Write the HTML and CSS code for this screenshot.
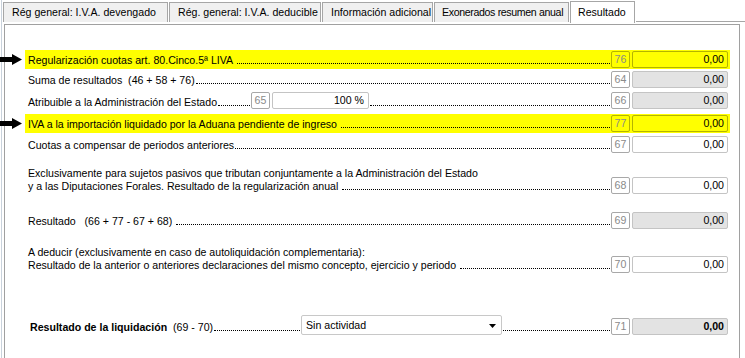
FILE: index.html
```html
<!DOCTYPE html>
<html lang="es">
<head>
<meta charset="utf-8">
<title>Resultado</title>
<link rel="stylesheet" href="styles.css">
</head>
<body>
<div class="window">
  <div class="tabs">
    <div class="tab t1">Rég general: I.V.A. devengado</div>
    <div class="tab t2">Rég. general: I.V.A. deducible</div>
    <div class="tab t3">Información adicional</div>
    <div class="tab t4">Exonerados resumen anual</div>
    <div class="tab active">Resultado</div>
    <div class="tab-fill"></div>
  </div>
  <div class="panel">
    <div class="row hl r1">
      <svg class="arrow" width="23" height="11" viewBox="0 0 23 11"><path d="M0 3h13V0l10 5.5L13 11V8H0z" fill="#000"/></svg>
      <div class="label"><span class="txt">Regularización cuotas art. 80.Cinco.5ª LIVA&nbsp;</span><span class="dots"></span></div>
      <div class="code">76</div>
      <div class="val">0,00</div>
    </div>
    <div class="row r2">
      <div class="label"><span class="txt">Suma de resultados&nbsp; (46 + 58 + 76)</span><span class="dots"></span></div>
      <div class="code">64</div>
      <div class="val calc">0,00</div>
    </div>
    <div class="row r3">
      <div class="label"><span class="txt">Atribuible a la Administración del Estado</span><span class="dots"></span><div class="code">65</div><div class="pct">100 %</div><span class="dots fixed"></span></div>
      <div class="code">66</div>
      <div class="val calc">0,00</div>
    </div>
    <div class="row hl r4">
      <svg class="arrow" width="23" height="11" viewBox="0 0 23 11"><path d="M0 3h13V0l10 5.5L13 11V8H0z" fill="#000"/></svg>
      <div class="label"><span class="txt">IVA a la importación liquidado por la Aduana pendiente de ingreso&nbsp;</span><span class="dots"></span></div>
      <div class="code">77</div>
      <div class="val">0,00</div>
    </div>
    <div class="row r5">
      <div class="label"><span class="txt">Cuotas a compensar de periodos anteriores</span><span class="dots"></span></div>
      <div class="code">67</div>
      <div class="val">0,00</div>
    </div>
    <div class="multi r6">
      <div class="line1">Exclusivamente para sujetos pasivos que tributan conjuntamente a la Administración del Estado</div>
      <div class="row">
        <div class="label"><span class="txt">y a las Diputaciones Forales. Resultado de la regularización anual&nbsp;</span><span class="dots"></span></div>
        <div class="code">68</div>
        <div class="val">0,00</div>
      </div>
    </div>
    <div class="row r7">
      <div class="label"><span class="txt">Resultado&nbsp;&nbsp; (66 + 77 - 67 + 68)&nbsp;</span><span class="dots"></span></div>
      <div class="code">69</div>
      <div class="val calc">0,00</div>
    </div>
    <div class="multi r8">
      <div class="line1">A deducir (exclusivamente en caso de autoliquidación complementaria):</div>
      <div class="row">
        <div class="label"><span class="txt">Resultado de la anterior o anteriores declaraciones del mismo concepto, ejercicio y periodo&nbsp;</span><span class="dots"></span></div>
        <div class="code">70</div>
        <div class="val">0,00</div>
      </div>
    </div>
    <div class="row r9">
      <div class="label"><span class="txt"><b>Resultado de la liquidación</b>&nbsp; (69 - 70)</span><span class="dots"></span>
        <div class="select"><span>Sin actividad</span><svg class="caret" width="7" height="4" viewBox="0 0 7 4"><path d="M0 0h7L3.5 4z" fill="#000"/></svg></div>
        <span class="dots fixed2"></span></div>
      <div class="code">71</div>
      <div class="val calc bold">0,00</div>
    </div>
  </div>
</div>
</body>
</html>
```
FILE: styles.css
```css
* { box-sizing: border-box; }
html, body { margin: 0; padding: 0; background: #fff; }
body {
  font-family: "Liberation Sans", Arial, sans-serif;
  font-size: 10.6px;
  color: #000;
  width: 745px;
  height: 358px;
  overflow: hidden;
}
.window {
  height: 358px;
  border-left: 1px solid #c9d2dc;
  margin-left: 1px;
  display: flex;
  flex-direction: column;
}
.tabs {
  display: flex;
  align-items: flex-end;
  height: 22px;
  padding-left: 1px;
}
.tab {
  height: 20px;
  line-height: 18px;
  padding: 0 0 0 8px;
  background: #f0f0f0;
  border: 1px solid #a6a6a6;
  border-bottom: none;
  margin-right: 1px;
  color: #000;
  white-space: nowrap;
}
.t1 { width: 165px; }
.t2 { width: 152px; }
.t3 { width: 111px; }
.t4 { width: 135px; margin-right: 1px; padding-left: 7px; letter-spacing: -0.35px; }
.tab.active {
  height: 22px;
  width: 65px;
  line-height: 20px;
  background: #fff;
  padding: 0 0 0 7px;
  position: relative;
  top: 1px;
}
.tab-fill {
  flex: 1;
  border-bottom: 1px solid #a6a6a6;
}
.panel {
  flex: 1;
  margin-top: 2px;
  margin-left: 2px;
  margin-right: 5px;
  border-top: 1px solid #a0a0a0;
  border-left: 1px solid #a0a0a0;
  border-right: 1px solid #a0a0a0;
  padding-left: 20px;
  padding-top: 25px;
}
.row {
  position: relative;
  display: flex;
  align-items: flex-end;
  width: 705px;
  height: 17px;
}
.row.hl {
  background: #ffff00;
  height: 19px;
  padding: 1px 0;
  align-items: center;
}
.hl .code, .hl .val { background: #ffff00; border-color: #b4b400; }
.arrow {
  position: absolute;
  left: -26px;
  top: 4px;
}
.label {
  flex: 1;
  display: flex;
  align-items: flex-end;
  height: 17px;
  padding-left: 3px;
  padding-bottom: 1px;
  min-width: 0;
}
.txt { white-space: nowrap; line-height: 13px; }
.dots {
  flex: 1;
  height: 1px;
  border-bottom: 1px dotted #000;
  margin-bottom: 3px;
  margin-right: 1px;
  margin-left: 1px;
}
.dots.fixed { flex: none; width: 240px; }
.dots.fixed2 { flex: none; width: 107px; }
.code {
  width: 19px;
  height: 17px;
  flex: none;
  border: 1px solid #a8a8a8;
  border-radius: 2px;
  color: #8a8a8a;
  text-align: center;
  line-height: 15px;
  background: #fff;
}
.val {
  width: 96px;
  height: 17px;
  flex: none;
  margin-left: 2px;
  margin-right: 2px;
  border: 1px solid #c4c4c4;
  border-radius: 2px;
  text-align: right;
  padding-right: 3px;
  line-height: 15px;
  background: #fff;
}
.val.calc { background: #e3e3e3; }
.val.bold { font-weight: bold; }
.r2 { margin-top: 2px; }
.r3 { margin-top: 4px; }
.r3 .label { padding-bottom: 0; }
.pct {
  width: 97px;
  height: 17px;
  margin-left: 2px;
  border: 1px solid #c4c4c4;
  border-radius: 2px;
  text-align: right;
  padding-right: 4px;
  line-height: 15px;
  flex: none;
}
.r4 { margin-top: 5px; }
.r5 { margin-top: 3px; }
.multi { width: 705px; }
.line1 { padding-left: 3px; line-height: 13px; margin-bottom: -3px; }
.r6 { margin-top: 14px; }
.r7 { margin-top: 18px; }
.r8 { margin-top: 17px; }
.r9 { margin-top: 45px; }
.r9 .label { padding-left: 5px; }
.select {
  flex: none;
  width: 201px;
  height: 20px;
  margin-bottom: -1px;
  border: 1px solid #c8c8c8;
  border-radius: 2px;
  display: flex;
  align-items: center;
  justify-content: space-between;
  padding: 0 4px 0 4px;
  background: #fff;
}
.caret { margin-right: 1px; margin-top: 2px; }
```
